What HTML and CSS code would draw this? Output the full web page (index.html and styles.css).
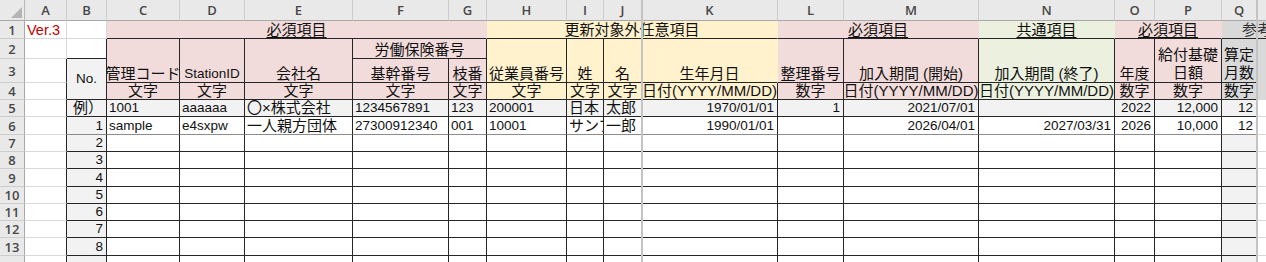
FILE: index.html
```html
<!DOCTYPE html>
<html lang="ja">
<head>
<meta charset="utf-8">
<title>Sheet</title>
<link rel="stylesheet" href="styles.css">
</head>
<body>
<div class="sheet">
  <!-- column headers -->
  <div class="c corner"><svg width="24" height="20" viewBox="0 0 24 20"><polygon points="22,7 22,18 11,18" fill="#b4b4b4"/></svg></div>
  <div class="c ch">A</div><div class="c ch">B</div><div class="c ch">C</div><div class="c ch">D</div><div class="c ch">E</div><div class="c ch">F</div><div class="c ch">G</div><div class="c ch">H</div><div class="c ch">I</div><div class="c ch">J</div><div class="c ch">K</div><div class="c ch">L</div><div class="c ch">M</div><div class="c ch">N</div><div class="c ch">O</div><div class="c ch">P</div><div class="c ch">Q</div><div class="c ch">R</div>

  <!-- row 1 -->
  <div class="c rh">1</div>
  <div class="c red mid">Ver.3</div>
  <div class="c"></div>
  <div class="c pk s5 nr bb ctr mid j"><u>必須項目</u></div>
  <div class="c yl s4 nr bb ctr mid j">更新対象外任意項目</div>
  <div class="c pk s2 nr bb ctr mid j"><u>必須項目</u></div>
  <div class="c gr nr bb ctr mid j"><u>共通項目</u></div>
  <div class="c pk s2 nr bb ctr mid j"><u>必須項目</u></div>
  <div class="c gy s2 bb mid j ref">参考項目</div>

  <!-- row 2 -->
  <div class="c rh">2</div>
  <div class="c"></div>
  <div class="c bk"></div>
  <div class="c pk bk rs2 ctr j">管理コード</div>
  <div class="c pk bk rs2 ctr">StationID</div>
  <div class="c pk bk rs2 ctr j">会社名</div>
  <div class="c pk bk s2 ctr j">労働保険番号</div>
  <div class="c yl bk rs2 ctr j">従業員番号</div>
  <div class="c yl bk rs2 ctr j">姓</div>
  <div class="c yl bk rs2 ctr j">名</div>
  <div class="c yl bk nr rs2 ctr j">生年月日</div>
  <div class="c pk bk rs2 ctr j">整理番号</div>
  <div class="c pk bk rs2 ctr j">加入期間 (開始)</div>
  <div class="c gr bk rs2 ctr j">加入期間 (終了)</div>
  <div class="c pk bk rs2 ctr j">年度</div>
  <div class="c pk bk rs2 ctr j wrap">給付基礎<br>日額</div>
  <div class="c gy bk rs2 ctr j wrap">算定<br>月数</div>
  <div class="c gy"></div>

  <!-- row 3 -->
  <div class="c rh">3</div>
  <div class="c br"></div>
  <div class="c lg bk rs2 ctr mid">No.</div>
  <div class="c pk bk ctr j">基幹番号</div>
  <div class="c pk bk ctr j">枝番</div>
  <div class="c gy"></div>

  <!-- row 4 -->
  <div class="c rh">4</div>
  <div class="c br"></div>
  <div class="c pk bk ctr j">文字</div>
  <div class="c pk bk ctr j">文字</div>
  <div class="c pk bk ctr j">文字</div>
  <div class="c pk bk ctr j">文字</div>
  <div class="c pk bk ctr j">文字</div>
  <div class="c yl bk ctr j">文字</div>
  <div class="c yl bk ctr j">文字</div>
  <div class="c yl bk ctr j">文字</div>
  <div class="c yl bk ctr j">日付(YYYY/MM/DD)</div>
  <div class="c pk bk ctr j">数字</div>
  <div class="c pk bk ctr j">日付(YYYY/MM/DD)</div>
  <div class="c gr bk ctr j">日付(YYYY/MM/DD)</div>
  <div class="c pk bk ctr j">数字</div>
  <div class="c pk bk ctr j">数字</div>
  <div class="c gy bk ctr j">数字</div>
  <div class="c gy"></div>

  <!-- row 5 -->
  <div class="c rh">5</div>
  <div class="c br"></div>
  <div class="c lg bk r j">例）</div>
  <div class="c lg bk">1001</div>
  <div class="c lg bk">aaaaaa</div>
  <div class="c lg bk j">〇×株式会社</div>
  <div class="c lg bk">1234567891</div>
  <div class="c lg bk">123</div>
  <div class="c lg bk">200001</div>
  <div class="c lg bk j">日本</div>
  <div class="c lg bk j">太郎</div>
  <div class="c lg bk r">1970/01/01</div>
  <div class="c lg bk r">1</div>
  <div class="c lg bk r">2021/07/01</div>
  <div class="c lg bk"></div>
  <div class="c lg bk r">2022</div>
  <div class="c lg bk r">12,000</div>
  <div class="c lg bk r">12</div>
  <div class="c"></div>

  <!-- row 6 -->
  <div class="c rh">6</div>
  <div class="c br"></div>
  <div class="c lg bk soft r">1</div>
  <div class="c bk soft">sample</div>
  <div class="c bk soft">e4sxpw</div>
  <div class="c bk soft j">一人親方団体</div>
  <div class="c bk soft">27300912340</div>
  <div class="c bk soft">001</div>
  <div class="c bk soft">10001</div>
  <div class="c bk soft j">サンプル</div>
  <div class="c bk soft j">一郎</div>
  <div class="c bk soft r">1990/01/01</div>
  <div class="c bk soft"></div>
  <div class="c bk soft r">2026/04/01</div>
  <div class="c bk soft r">2027/03/31</div>
  <div class="c bk soft r">2026</div>
  <div class="c bk soft r">10,000</div>
  <div class="c bk soft r">12</div>
  <div class="c"></div>

  <!-- row 7 -->
  <div class="c rh">7</div><div class="c br"></div><div class="c lg bk r">2</div>
  <div class="c bk"></div><div class="c bk"></div><div class="c bk"></div><div class="c bk"></div><div class="c bk"></div><div class="c bk"></div><div class="c bk"></div><div class="c bk"></div><div class="c bk"></div><div class="c bk"></div><div class="c bk"></div><div class="c bk"></div><div class="c bk"></div><div class="c bk"></div>
  <div class="c lg bk"></div><div class="c"></div>

  <!-- row 8 -->
  <div class="c rh">8</div><div class="c br"></div><div class="c lg bk r">3</div>
  <div class="c bk"></div><div class="c bk"></div><div class="c bk"></div><div class="c bk"></div><div class="c bk"></div><div class="c bk"></div><div class="c bk"></div><div class="c bk"></div><div class="c bk"></div><div class="c bk"></div><div class="c bk"></div><div class="c bk"></div><div class="c bk"></div><div class="c bk"></div>
  <div class="c lg bk"></div><div class="c"></div>

  <!-- row 9 -->
  <div class="c rh">9</div><div class="c br"></div><div class="c lg bk r">4</div>
  <div class="c bk"></div><div class="c bk"></div><div class="c bk"></div><div class="c bk"></div><div class="c bk"></div><div class="c bk"></div><div class="c bk"></div><div class="c bk"></div><div class="c bk"></div><div class="c bk"></div><div class="c bk"></div><div class="c bk"></div><div class="c bk"></div><div class="c bk"></div>
  <div class="c lg bk"></div><div class="c"></div>

  <!-- row 10 -->
  <div class="c rh">10</div><div class="c br"></div><div class="c lg bk r">5</div>
  <div class="c bk"></div><div class="c bk"></div><div class="c bk"></div><div class="c bk"></div><div class="c bk"></div><div class="c bk"></div><div class="c bk"></div><div class="c bk"></div><div class="c bk"></div><div class="c bk"></div><div class="c bk"></div><div class="c bk"></div><div class="c bk"></div><div class="c bk"></div>
  <div class="c lg bk"></div><div class="c"></div>

  <!-- row 11 -->
  <div class="c rh">11</div><div class="c br"></div><div class="c lg bk r">6</div>
  <div class="c bk"></div><div class="c bk"></div><div class="c bk"></div><div class="c bk"></div><div class="c bk"></div><div class="c bk"></div><div class="c bk"></div><div class="c bk"></div><div class="c bk"></div><div class="c bk"></div><div class="c bk"></div><div class="c bk"></div><div class="c bk"></div><div class="c bk"></div>
  <div class="c lg bk"></div><div class="c"></div>

  <!-- row 12 -->
  <div class="c rh">12</div><div class="c br"></div><div class="c lg bk r">7</div>
  <div class="c bk"></div><div class="c bk"></div><div class="c bk"></div><div class="c bk"></div><div class="c bk"></div><div class="c bk"></div><div class="c bk"></div><div class="c bk"></div><div class="c bk"></div><div class="c bk"></div><div class="c bk"></div><div class="c bk"></div><div class="c bk"></div><div class="c bk"></div>
  <div class="c lg bk"></div><div class="c"></div>

  <!-- row 13 -->
  <div class="c rh">13</div><div class="c br"></div><div class="c lg bk r">8</div>
  <div class="c bk"></div><div class="c bk"></div><div class="c bk"></div><div class="c bk"></div><div class="c bk"></div><div class="c bk"></div><div class="c bk"></div><div class="c bk"></div><div class="c bk"></div><div class="c bk"></div><div class="c bk"></div><div class="c bk"></div><div class="c bk"></div><div class="c bk"></div>
  <div class="c lg bk"></div><div class="c"></div>

  <!-- row 14 -->
  <div class="c rh">14</div><div class="c br"></div><div class="c lg bk r">9</div>
  <div class="c bk"></div><div class="c bk"></div><div class="c bk"></div><div class="c bk"></div><div class="c bk"></div><div class="c bk"></div><div class="c bk"></div><div class="c bk"></div><div class="c bk"></div><div class="c bk"></div><div class="c bk"></div><div class="c bk"></div><div class="c bk"></div><div class="c bk"></div>
  <div class="c lg bk"></div><div class="c"></div>

  <div class="vline vline-k"></div>
  <div class="vline vline-r"></div>
</div>
</body>
</html>
```

FILE: styles.css
```css
html, body {
  margin: 0;
  padding: 0;
  background: #ffffff;
  overflow: hidden;
}

.sheet {
  position: relative;
  width: 1266px;
  height: 262px;
  overflow: hidden;
  display: grid;
  grid-template-columns: 25px 42px 40px 73px 65px 108px 96px 38px 80px 37px 38px 136px 66px 135px 136px 40px 67px 35px 60px;
  grid-template-rows: 21px 18px 20px 24px 17px 17px 18px 17px 17px 18px 17px 17px 17px 18px 20px;
  font-family: "Liberation Sans", "Noto Sans CJK JP", sans-serif;
  font-size: 13.5px;
  color: #111111;
}

.c {
  box-sizing: border-box;
  min-width: 0;
  border-right: 1px solid #d9d9d9;
  border-bottom: 1px solid #d9d9d9;
  display: flex;
  align-items: flex-end;
  justify-content: flex-start;
  padding: 0 2px;
  white-space: nowrap;
  overflow: hidden;
  line-height: 16px;
}

/* headers */
.corner {
  background: #e9e9e9;
  border-right: 1px solid #b8b8b8;
  border-bottom: 1px solid #a8a8a8;
  padding: 0;
}
.corner svg { display: block; }

.ch {
  background: #e9e9e9;
  border-right: 1px solid #cdcdcd;
  border-bottom: 1px solid #a8a8a8;
  justify-content: center;
  align-items: center;
  font-family: "Open Sans", "Liberation Sans", sans-serif;
  font-size: 13px;
  font-weight: 600;
  color: #474747;
}

.rh {
  background: #e9e9e9;
  border-right: 1px solid #a8a8a8;
  border-bottom: 1px solid #cdcdcd;
  justify-content: center;
  align-items: center;
  font-family: "Open Sans", "Liberation Sans", sans-serif;
  font-size: 13px;
  font-weight: 600;
  color: #474747;
}

/* fills */
.pk { background: #f2dcdb; }
.yl { background: #fff2cc; }
.gr { background: #ebf1de; }
.gy { background: #d9d9d9; }
.lg { background: #f2f2f2; }

/* borders */
.bk { border-right-color: #262626; border-bottom-color: #262626; }
.br { border-right-color: #262626; }
.bb { border-bottom-color: #262626; }
.nr { border-right-color: transparent; }
.soft { border-bottom-color: #8c8c8c; }

/* spans */
.s2 { grid-column: span 2; }
.s4 { grid-column: span 4; }
.s5 { grid-column: span 5; }
.rs2 { grid-row: span 2; }

/* alignment */
.ctr { justify-content: center; }
.r { justify-content: flex-end; padding-right: 3px; }
.mid { align-items: center; }

/* text */
.j { font-size: 15px; }
.red { color: #c00000; font-size: 14.5px; }
.wrap {
  white-space: normal;
  flex-direction: column;
  justify-content: flex-end;
  align-items: center;
  text-align: center;
  line-height: 18px;
}
.ref {
  padding-left: 20px;
  color: #333333;
}

u {
  text-decoration: underline;
  text-underline-offset: 2px;
  text-decoration-thickness: 1px;
}

/* hidden-column / freeze indicators lying over the grid */
.vline {
  position: absolute;
  top: 0;
  bottom: 0;
  width: 2px;
  background: #c4c4c4;
}
.vline-k { left: 641px; }
.vline-r { left: 1256px; }
```
